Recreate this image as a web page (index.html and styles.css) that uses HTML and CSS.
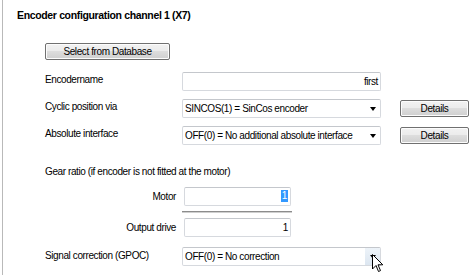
FILE: index.html
```html
<!DOCTYPE html>
<html lang="en">
  <head>
    <meta charset="utf-8" />
    <title>Encoder configuration</title>
    <link rel="stylesheet" href="styles.css">
  </head>
  <body>
    <div class="panel">
      <h1 class="title">Encoder configuration channel 1 (X7)</h1>
      <div class="form">
        <button class="btn db-btn">Select from Database</button>

        <div class="row first-row">
          <span class="label">Encodername</span>
          <div class="field text right">first</div>
        </div>
        <div class="row">
          <span class="label">Cyclic position via</span>
          <div class="field combo">
            <span>SINCOS(1) = SinCos encoder</span>
            <span class="drop"><i class="arrow"></i></span>
          </div>
          <button class="btn details">Details</button>
        </div>
        <div class="row">
          <span class="label">Absolute interface</span>
          <div class="field combo">
            <span>OFF(0) = No additional absolute interface</span>
            <span class="drop"><i class="arrow"></i></span>
          </div>
          <button class="btn details">Details</button>
        </div>

        <p class="gear">Gear ratio (if encoder is not fitted at the motor)</p>
        <div class="row ratio">
          <span class="label sub">Motor</span>
          <div class="field text right short"><span class="sel">1</span></div>
        </div>
        <div class="divider"></div>
        <div class="row ratio">
          <span class="label sub">Output drive</span>
          <div class="field text right short">1</div>
        </div>

        <div class="row last-row">
          <span class="label">Signal correction (GPOC)</span>
          <div class="field combo">
            <span>OFF(0) = No correction</span>
            <span class="drop hover"><i class="arrow"></i></span>
            <svg class="cursor" width="12" height="19" viewBox="0 0 12 19">
              <path d="M0.5 0.5 L0.5 15 L4 11.5 L6.5 17.5 L8.5 16.6 L6 10.8 L10.8 10.8 Z" fill="#fff" stroke="#000" stroke-width="1" stroke-linejoin="miter"/>
            </svg>
          </div>
        </div>
      </div>
    </div>
  </body>
</html>
```

FILE: styles.css
```css
body {
  margin: 0;
  background: #fff;
  font-family: "Liberation Sans", Arial, sans-serif;
  font-size: 10px;
  letter-spacing: -0.4px;
  color: #000;
}

.panel {
  margin-left: 2px;
  height: 275px;
  border-left: 1px solid #b9b9b9;
  box-sizing: border-box;
}

.title {
  margin: 0;
  padding: 9px 0 0 14px;
  font-size: 10.5px;
  font-weight: bold;
  letter-spacing: -0.35px;
  line-height: 13px;
}

.form {
  padding: 0 0 0 42px;
}

.btn {
  font-family: inherit;
  font-size: 10px;
  letter-spacing: -0.4px;
  color: #000;
  border: 1px solid #707070;
  border-radius: 2px;
  background: linear-gradient(#f2f2f2 0%, #ebebeb 50%, #dddddd 50%, #cfcfcf 100%);
  padding: 0;
  box-shadow: inset 0 0 0 1px #fcfcfc;
}

.db-btn {
  display: block;
  margin-top: 21px;
  width: 125px;
  height: 17px;
}

.row {
  display: flex;
  align-items: center;
  height: 19px;
  margin-top: 8px;
}

.first-row {
  margin-top: 12px;
}

.label {
  width: 137px;
  margin-top: -4px;
}

.label.sub {
  width: 131px;
  text-align: right;
  margin-right: 8px;
}

.field {
  box-sizing: border-box;
  width: 199px;
  height: 19px;
  border: 1px solid #d6d9de;
  border-top-color: #c4c7cc;
  border-radius: 2px;
  display: flex;
  align-items: center;
  padding: 0 2px;
  white-space: nowrap;
}

.field.right {
  justify-content: flex-end;
}

.field.short {
  width: 107px;
}

.combo {
  position: relative;
  padding-right: 0;
  justify-content: space-between;
}

.drop {
  width: 15px;
  height: 17px;
  display: flex;
  align-items: center;
  justify-content: center;
}

.drop.hover {
  background: linear-gradient(#edf3f9, #dce6f0);
}

.arrow {
  width: 0;
  height: 0;
  border-left: 3px solid transparent;
  border-right: 3px solid transparent;
  border-top: 4px solid #000;
}

.details {
  width: 69px;
  height: 17px;
  margin-left: 19px;
}

.gear {
  margin: 20px 0 0;
  line-height: 13px;
}

.ratio {
  margin-top: 9px;
  height: 18px;
}

.ratio + .divider + .ratio {
  margin-top: 5px;
}

.ratio .label {
  margin-top: 0;
}

.divider {
  width: 110px;
  height: 0;
  margin: 6px 0 0 137px;
  border-top: 1px solid #8c8c8c;
  border-bottom: 1px solid #cfcfcf;
}

.sel {
  background: #3399ff;
  color: #fff;
  padding: 0 1px;
  line-height: 12px;
}

.last-row {
  margin-top: 11px;
}

.last-row .label {
  margin-top: -2px;
}

.cursor {
  position: absolute;
  left: 189px;
  top: 6px;
}
```
